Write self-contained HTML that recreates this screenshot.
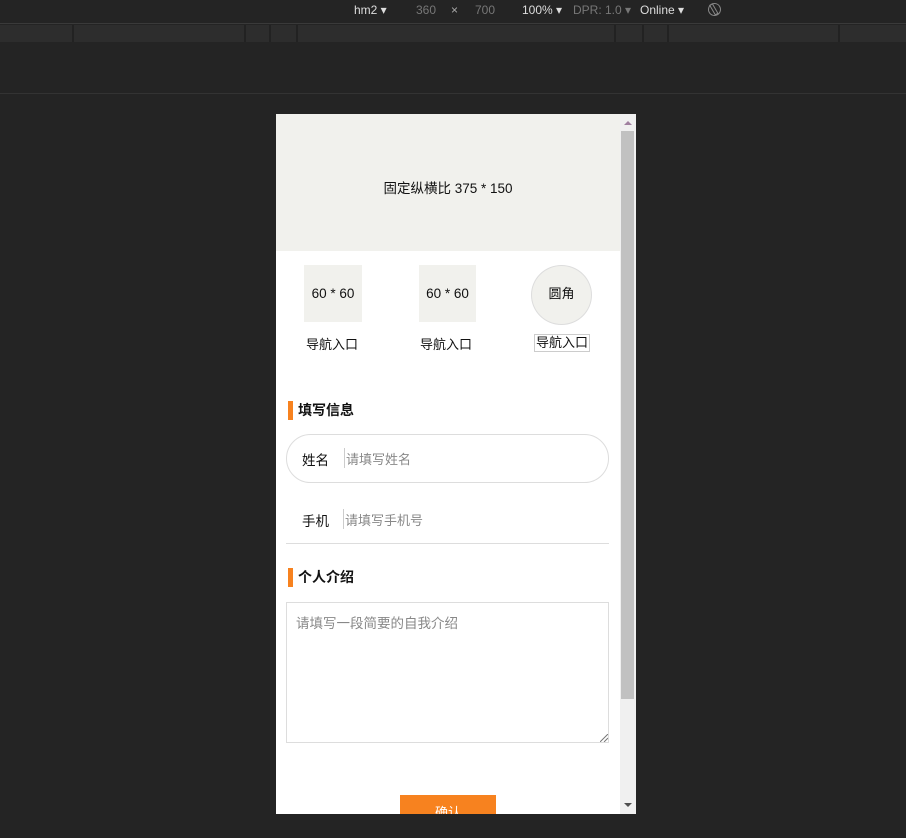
<!DOCTYPE html>
<html><head><meta charset="utf-8"><style>
*{margin:0;padding:0;box-sizing:border-box}
body{width:906px;height:838px;background:#242424;position:relative;overflow:hidden;font-family:"Liberation Sans","Noto Sans CJK SC",sans-serif;font-size:14px;color:#111}
.a{position:absolute}
.tb{font-size:12px;color:#ddd;top:3px}
.pg{left:276px;top:114px;width:344px;height:700px;background:#fff;overflow:hidden}
.t{position:absolute;white-space:nowrap}
</style></head><body>
<div class="a" style="left:0;top:0;width:906px;height:23px;background:#242424"></div>
<div class="a tb" style="left:354px">hm2 ▾</div>
<div class="a tb" style="left:416px;color:#777">360</div>
<div class="a tb" style="left:451px;color:#aaa">×</div>
<div class="a tb" style="left:475px;color:#777">700</div>
<div class="a tb" style="left:522px">100% ▾</div>
<div class="a tb" style="left:573px;color:#777">DPR: 1.0 ▾</div>
<div class="a tb" style="left:640px">Online ▾</div>
<div class="a" style="left:708px;top:3px;width:13px;height:13px;border:1.5px solid #888;border-radius:50%;transform:rotate(-30deg)"><div style="position:absolute;left:3px;top:-1px;width:4px;height:12px;border:1px solid #888"></div></div>
<div class="a" style="left:0;top:23px;width:906px;height:1px;background:#3a3a3a"></div>
<div class="a" style="left:0;top:25px;width:906px;height:17px;background:#2d2d2d"></div>
<div class="a" style="left:72px;top:25px;width:2px;height:17px;background:#222"></div>
<div class="a" style="left:244px;top:25px;width:2px;height:17px;background:#222"></div>
<div class="a" style="left:269px;top:25px;width:2px;height:17px;background:#222"></div>
<div class="a" style="left:296px;top:25px;width:2px;height:17px;background:#222"></div>
<div class="a" style="left:614px;top:25px;width:2px;height:17px;background:#222"></div>
<div class="a" style="left:642px;top:25px;width:2px;height:17px;background:#222"></div>
<div class="a" style="left:667px;top:25px;width:2px;height:17px;background:#222"></div>
<div class="a" style="left:838px;top:25px;width:2px;height:17px;background:#222"></div>
<div class="a" style="left:0;top:93px;width:906px;height:1px;background:#333"></div>

<div class="a pg">
 <div class="t" style="left:0;top:0;width:344px;height:137px;background:#f1f1ed"></div>
 <div class="t" style="left:0;top:63px;width:344px;text-align:center;font-size:13.5px">固定纵横比 375 * 150</div>
 <div class="t" style="left:28px;top:151px;width:58px;height:57px;background:#f1f1ed;text-align:center;line-height:57px;font-size:13.5px">60 * 60</div>
 <div class="t" style="left:143px;top:151px;width:57px;height:57px;background:#f1f1ed;text-align:center;line-height:57px;font-size:13.5px">60 * 60</div>
 <div class="t" style="left:255px;top:151px;width:61px;height:60px;background:#f1f1ed;border:1px solid #ddd;border-radius:50%;text-align:center;line-height:56px;font-size:13px">圆角</div>
 <div class="t" style="left:30px;top:220px;font-size:13px">导航入口</div>
 <div class="t" style="left:144px;top:220px;font-size:13px">导航入口</div>
 <div class="t" style="left:258px;top:220px;font-size:13px;border:1px solid #ccc;padding:0 1px;line-height:16px">导航入口</div>

 <div class="t" style="left:12px;top:287px;width:5px;height:19px;background:#f7821f"></div>
 <div class="t" style="left:22px;top:286px;font-weight:bold;font-size:14px">填写信息</div>
 <div class="t" style="left:10px;top:320px;width:323px;height:49px;border:1px solid #ddd;border-radius:25px"></div>
 <div class="t" style="left:26px;top:335px;font-size:13.5px">姓名</div>
 <div class="t" style="left:68px;top:334px;width:1px;height:20px;background:#ccc"></div>
 <div class="t" style="left:70px;top:335px;font-size:13px;color:#888">请填写姓名</div>
 <div class="t" style="left:26px;top:396px;font-size:13.5px">手机</div>
 <div class="t" style="left:67px;top:395px;width:1px;height:20px;background:#ccc"></div>
 <div class="t" style="left:69px;top:396px;font-size:13px;color:#888">请填写手机号</div>
 <div class="t" style="left:10px;top:429px;width:323px;height:1px;background:#ddd"></div>

 <div class="t" style="left:12px;top:454px;width:5px;height:19px;background:#f7821f"></div>
 <div class="t" style="left:22px;top:453px;font-weight:bold;font-size:14px">个人介绍</div>
 <div class="t" style="left:10px;top:488px;width:323px;height:141px;border:1px solid #ddd"></div>
 <div class="t" style="left:20px;top:498px;font-size:13.5px;color:#888">请填写一段简要的自我介绍</div>
 <svg class="t" style="left:324px;top:620px" width="8" height="8"><path d="M0 8L8 0M4 8L8 4" stroke="#777" stroke-width="1"/></svg>

 <div class="t" style="left:124px;top:681px;width:96px;height:30px;background:#f7821f;color:#fff;text-align:center;line-height:36px;font-size:13px">确认</div>
</div>
<div class="a" style="left:620px;top:114px;width:16px;height:700px;background:#f0f0f0"></div>
<div class="a" style="left:621px;top:131px;width:13px;height:568px;background:#c1c1c1"></div>
<div class="a" style="left:624px;top:121px;width:0;height:0;border-left:4px solid transparent;border-right:4px solid transparent;border-bottom:4px solid #a080a0"></div>
<div class="a" style="left:624px;top:803px;width:0;height:0;border-left:4px solid transparent;border-right:4px solid transparent;border-top:4px solid #505050"></div>
</body></html>
